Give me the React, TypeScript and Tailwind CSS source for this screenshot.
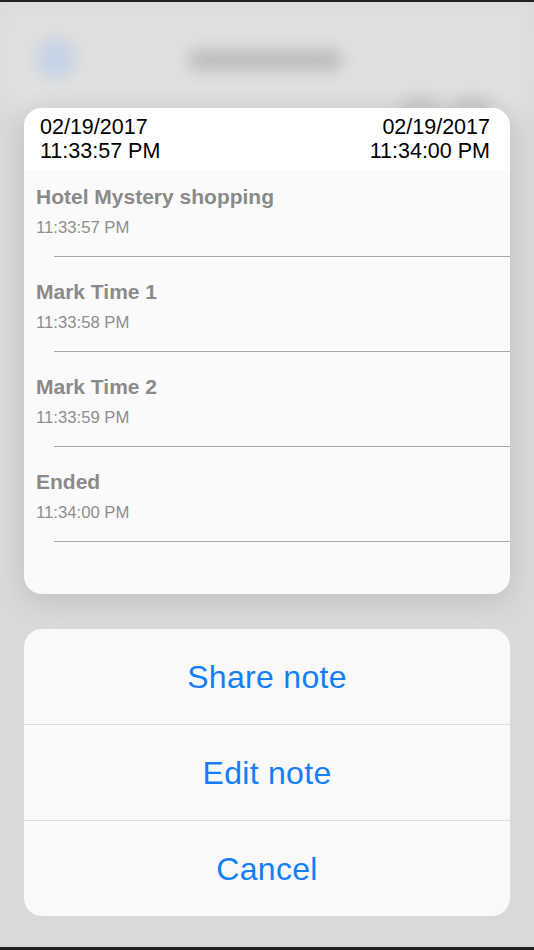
import React from 'react';

type Mark = {
  title: string;
  time: string;
};

const marks: Mark[] = [
  { title: 'Hotel Mystery shopping', time: '11:33:57 PM' },
  { title: 'Mark Time 1', time: '11:33:58 PM' },
  { title: 'Mark Time 2', time: '11:33:59 PM' },
  { title: 'Ended', time: '11:34:00 PM' },
];

const actions = ['Share note', 'Edit note', 'Cancel'];

export default function App() {
  return (
    <div
      className="relative w-[534px] h-[950px] overflow-hidden bg-[#d9d9d9] flex flex-col"
      style={{ fontFamily: '"Liberation Sans", Arial, sans-serif' }}
    >
      {/* blurred screen behind the preview */}
      <div className="absolute inset-0 pointer-events-none">
        <div className="absolute left-0 right-0 top-[2px] h-[110px] bg-[#e0e0e0] blur-md" />
        <div className="absolute left-[36px] top-[38px] w-[40px] h-[40px] rounded-full bg-[#c3d3e6] blur-[8px]" />
        <div className="absolute left-[188px] top-[50px] w-[155px] h-[20px] rounded-full bg-[#bababa] blur-[8px]" />
        <div className="absolute left-[400px] top-[98px] w-[40px] h-[16px] rounded-full bg-[#c4c4c4] blur-[8px]" />
        <div className="absolute left-[452px] top-[98px] w-[40px] h-[16px] rounded-full bg-[#c4c4c4] blur-[8px]" />
      </div>

      <div className="relative h-[2px] bg-[#222222] shrink-0" />

      <div className="relative flex-1 flex flex-col px-[24px] pt-[106px]">
        {/* preview card */}
        <div className="rounded-[18px] overflow-hidden bg-[#fafafa] shadow-[0_6px_28px_rgba(0,0,0,0.12)] h-[486px] flex flex-col">
          <div className="bg-white flex justify-between pl-[16px] pr-[20px] pt-[7px] pb-[7px] text-[21.5px] leading-[24px] text-black">
            <div>
              <div>02/19/2017</div>
              <div>11:33:57 PM</div>
            </div>
            <div className="text-right">
              <div>02/19/2017</div>
              <div>11:34:00 PM</div>
            </div>
          </div>
          <div className="flex flex-col">
            {marks.map((m, i) => (
              <div key={m.title}>
                <div className={`px-[12px] pb-[18px] ${i === 0 ? 'pt-[15px]' : 'pt-[23px]'}`}>
                  <div className="text-[21px] leading-[24px] font-bold text-[#8a8a8a]">{m.title}</div>
                  <div className="mt-[9px] text-[16.7px] leading-[20px] text-[#8e8e8e]">{m.time}</div>
                </div>
                <div className="ml-[30px] h-px bg-[#a8a8a8]" />
              </div>
            ))}
          </div>
        </div>

        {/* action sheet */}
        <div className="mt-[35px] rounded-[18px] overflow-hidden bg-[#f9f9f9] flex flex-col">
          {actions.map((a, i) => (
            <div key={a} className={i > 0 ? 'border-t border-[#dedede]' : ''}>
              <div className="h-[95px] flex items-center justify-center text-[32px] tracking-[0.3px] text-[#147efb]">{a}</div>
            </div>
          ))}
        </div>
      </div>

      <div className="relative h-[3px] bg-[#222222] shrink-0" />
    </div>
  );
}
